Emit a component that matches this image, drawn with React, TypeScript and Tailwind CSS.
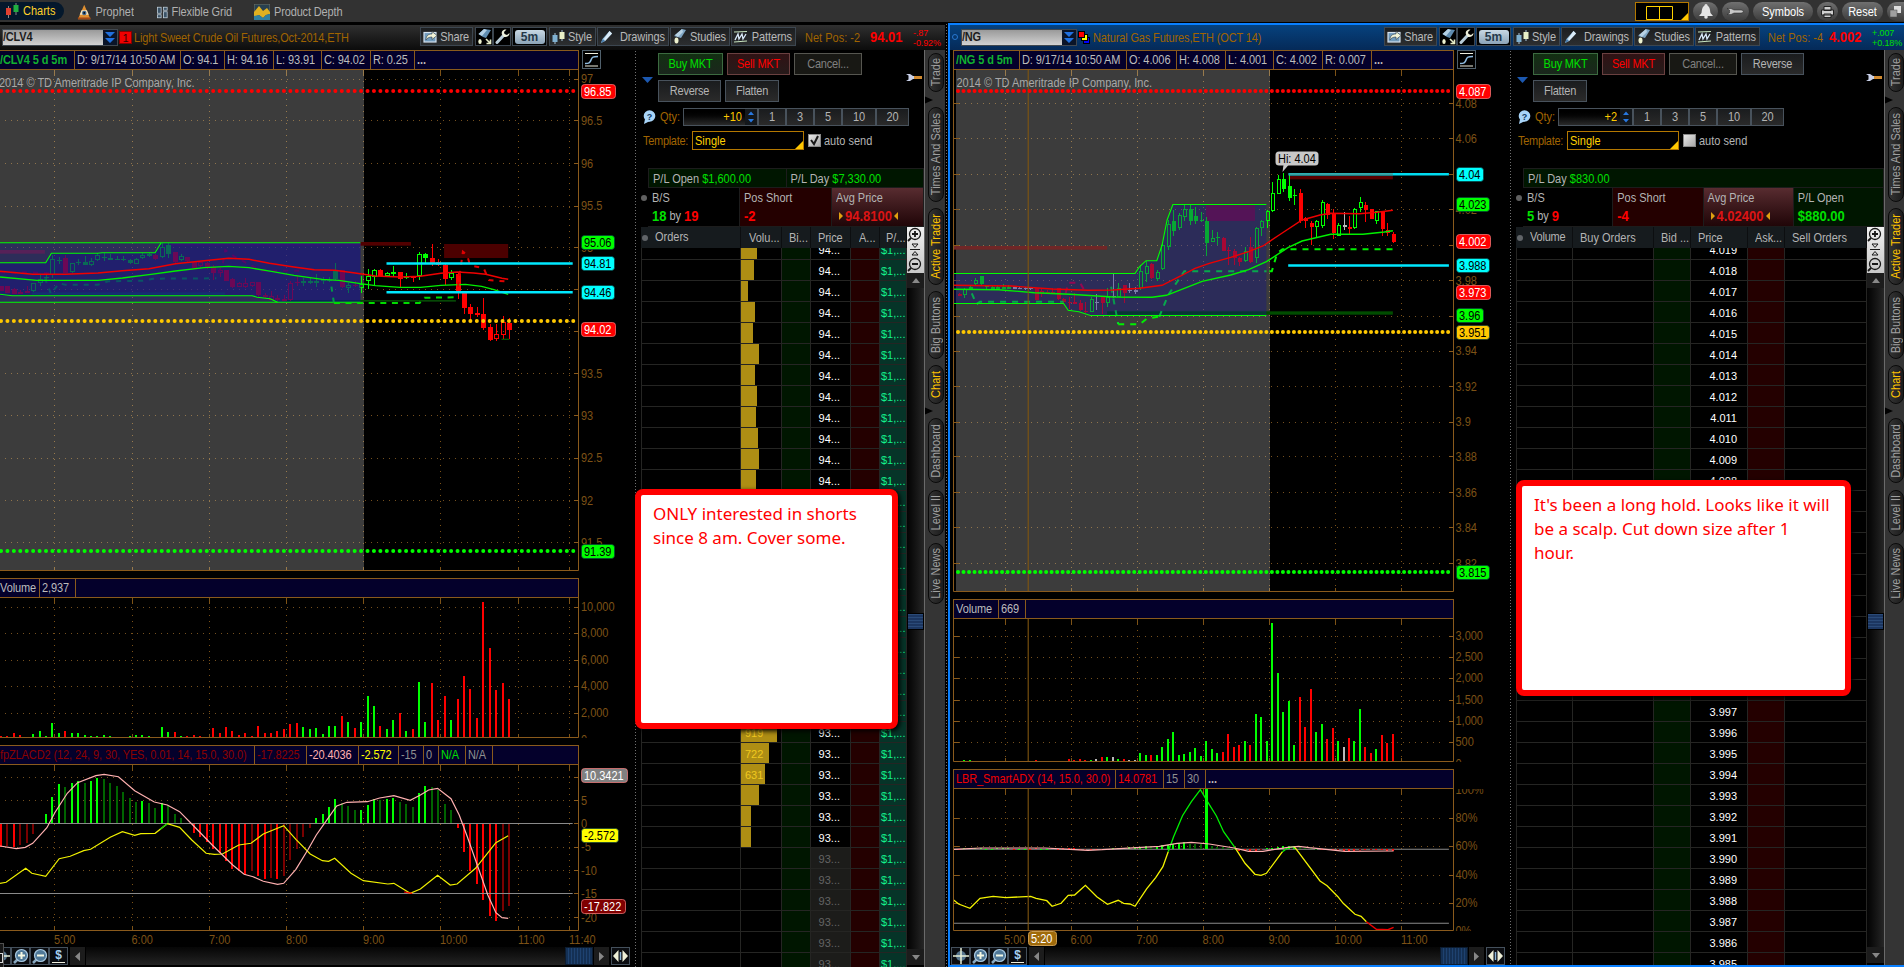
import type { ReactNode } from 'react';

/* ---------- shared text helpers ---------- */

function L({ children, className = '' }: { children: ReactNode; className?: string }) {
  return <span className={`inline-block scale-y-[1.12] whitespace-pre ${className}`}>{children}</span>;
}

function T({ x, y, fill = '#7d5216', children, anchor = 'start', size = 11 }: { x: number; y: number; fill?: string; children: ReactNode; anchor?: 'start' | 'middle' | 'end'; size?: number }) {
  return (
    <text transform={`translate(${x} ${y + 4.4}) scale(1 1.12)`} fontSize={size} fill={fill} textAnchor={anchor}>
      {children}
    </text>
  );
}

function Plot({ x, y, w, h, children }: { x: number; y: number; w: number; h: number; children: ReactNode }) {
  return (
    <svg width={w} height={h} viewBox={`${x} ${y} ${w} ${h}`} className="block shrink-0 overflow-hidden">
      {children}
    </svg>
  );
}

/* ---------- chart data ---------- */

type Candle = [number, number, number, number, string];

// body top, body bottom, high, low, kind (upper case = hollow)
const CL: Candle[] = [
  [197, 214, 197, 214, 'r'], [199, 219, 199, 219, 'r'], [208, 221, 205, 222, 'r'], [215, 221, 210, 222, 'R'], [213, 219, 198, 220, 'R'],
  [190, 214, 188, 215, 'G'], [178, 190, 165, 198, 'G'], [171, 174, 155, 180, 'g'], [118, 166, 105, 175, 'G'], [119, 122, 110, 133, 'g'],
  [115, 158, 105, 160, 'r'], [130, 155, 128, 158, 'G'], [126, 129, 118, 134, 'g'], [126, 134, 108, 136, 'g'], [122, 136, 115, 138, 'G'],
  [105, 120, 100, 124, 'G'], [112, 115, 100, 122, 'g'], [114, 120, 103, 121, 'g'], [117, 120, 108, 121, 'g'], [116, 119, 108, 123, 'g'],
  [121, 128, 117, 132, 'g'], [118, 131, 115, 133, 'G'], [106, 115, 100, 117, 'G'], [103, 107, 98, 110, 'g'], [106, 117, 103, 119, 'r'],
  [80, 110, 70, 113, 'G'], [75, 102, 68, 115, 'g'], [97, 125, 95, 128, 'r'], [108, 120, 102, 123, 'G'], [112, 123, 110, 125, 'r'],
  [125, 143, 122, 145, 'r'], [127, 138, 125, 143, 'R'], [130, 142, 125, 146, 'r'], [140, 160, 135, 180, 'r'], [150, 160, 145, 172, 'R'],
  [150, 182, 150, 184, 'r'], [178, 200, 173, 203, 'r'], [190, 200, 185, 200, 'R'], [190, 200, 175, 203, 'R'], [187, 198, 185, 200, 'R'],
  [187, 226, 187, 230, 'r'], [224, 232, 220, 234, 'r'], [229, 239, 212, 240, 'R'], [234, 240, 225, 242, 'r'], [238, 244, 225, 244, 'r'],
  [188, 240, 182, 243, 'R'], [185, 190, 168, 197, 'r'], [182, 190, 175, 197, 'G'], [184, 188, 173, 192, 'g'], [183, 188, 162, 200, 'G'],
  [176, 182, 172, 192, 'g'], [179, 182, 170, 185, 'g'], [150, 178, 130, 180, 'g'], [150, 200, 150, 205, 'r'], [196, 204, 190, 218, 'G'],
  [194, 197, 183, 200, 'r'], [193, 205, 167, 219, 'G'], [168, 182, 148, 208, 'G'], [150, 172, 148, 198, 'G'], [150, 168, 148, 168, 'r'],
  [160, 167, 155, 170, 'G'], [157, 163, 138, 170, 'G'], [156, 177, 156, 200, 'r'], [169, 175, 158, 177, 'G'], [171, 174, 168, 186, 'r'],
  [103, 168, 97, 180, 'G'], [103, 113, 99, 128, 'g'], [114, 130, 72, 138, 'r'], [127, 136, 118, 139, 'r'], [136, 177, 132, 196, 'r'],
  [160, 175, 150, 180, 'G'], [162, 217, 158, 238, 'r'], [218, 263, 215, 282, 'r'], [262, 282, 252, 298, 'r'], [280, 284, 262, 290, 'r'],
  [282, 323, 234, 329, 'r'], [322, 359, 311, 362, 'r'], [343, 356, 311, 362, 'R'], [306, 344, 288, 357, 'R'], [309, 329, 294, 358, 'r'],
];

const NG: Candle[] = [
  [432, 437, 430, 438, 'r'], [418, 434, 415, 443, 'G'], [412, 417, 405, 420, 'g'], [391, 403, 385, 408, 'G'], [378, 402, 378, 405, 'g'],
  [408, 412, 404, 416, 'g'], [411, 416, 405, 418, 'g'], [411, 416, 405, 418, 'g'], [410, 416, 402, 418, 'G'], [410, 416, 404, 416, 'g'],
  [412, 416, 410, 418, 'w'], [413, 417, 410, 418, 'w'], [413, 418, 410, 420, 'w'], [414, 418, 412, 420, 'w'], [414, 449, 414, 450, 'r'],
  [422, 432, 415, 440, 'R'], [425, 430, 420, 430, 'R'], [426, 430, 415, 432, 'r'], [414, 446, 414, 450, 'r'], [447, 455, 445, 460, 'r'],
  [455, 460, 440, 478, 'r'], [455, 460, 430, 460, 'R'], [459, 479, 450, 483, 'r'], [482, 486, 455, 488, 'r'], [447, 485, 440, 487, 'G'],
  [455, 458, 432, 480, 'w'], [440, 460, 437, 492, 'r'], [440, 460, 415, 470, 'G'], [438, 441, 372, 445, 'w'], [413, 440, 400, 440, 'G'],
  [405, 430, 405, 460, 'r'], [420, 423, 400, 430, 'w'], [421, 425, 410, 432, 'w'], [364, 415, 345, 420, 'G'], [347, 372, 333, 395, 'G'],
  [343, 385, 338, 388, 'r'], [365, 386, 360, 392, 'G'], [284, 357, 280, 360, 'G'], [221, 290, 210, 300, 'G'], [213, 242, 180, 258, 'g'],
  [194, 235, 190, 240, 'G'], [178, 200, 165, 212, 'G'], [178, 212, 165, 225, 'g'], [199, 214, 170, 222, 'g'], [211, 214, 185, 215, 'g'],
  [213, 279, 200, 317, 'g'], [263, 275, 240, 277, 'G'], [261, 265, 245, 285, 'g'], [263, 303, 262, 303, 'r'], [300, 304, 290, 345, 'r'],
  [304, 325, 298, 345, 'r'], [323, 335, 320, 348, 'r'], [303, 332, 290, 335, 'G'], [291, 337, 262, 338, 'r'], [235, 325, 232, 338, 'G'],
  [213, 233, 210, 258, 'G'], [184, 212, 180, 233, 'G'], [130, 184, 95, 186, 'G'], [88, 131, 75, 132, 'G'], [88, 117, 70, 125, 'g'],
  [109, 143, 75, 152, 'g'], [136, 139, 118, 165, 'g'], [129, 212, 118, 220, 'r'], [205, 214, 200, 233, 'r'], [219, 232, 213, 284, 'r'],
  [213, 232, 210, 260, 'G'], [157, 227, 150, 233, 'G'], [162, 194, 160, 208, 'r'], [190, 248, 178, 268, 'r'], [226, 257, 220, 258, 'G'],
  [226, 230, 186, 240, 'w'], [232, 237, 198, 255, 'r'], [178, 235, 175, 238, 'G'], [157, 173, 141, 186, 'G'], [164, 179, 155, 215, 'r'],
  [178, 206, 176, 208, 'r'], [184, 212, 182, 222, 'G'], [184, 236, 183, 257, 'r'], [240, 248, 220, 257, 'r'], [252, 276, 246, 280, 'r'],
];

const CL_VOL = '528r 528r 519r 525r - 522g 513g 528g 489g 519g 513r 519g 519g 525g 528g 528g 525g 528g - - 528g 525g 525g 528g - 501g 516g 516r 528g 528r 525r 528r - 504r 519r 501r 513r 525r 519r 528r 498r 519r 519r 513r 507r 492r 489r 501g 507g 504g 522g 498g 498g 468r 486g 504r 486g 408g 438g 498r 507g 480g 459r 513g 507r 366g 486g 369r 480r 408r 480g 417r 348r 387r 474r 126r 264r 390r 369r 417r'.split(' ');
const CL_MACD = '862r 858m 862r 856m 850m 822m - 762g 711g 672g 681d 669g 663g 669d 663g 654g 657d 669d 678d 696d 714d 726d 723g 729d 744d 729g 735d 762d 774d 792r 819r 831r 846r 867r 879r 903r 927r 933r 942r 933m 948r 957r 954m 957r 948m 900m 867m 831m 804m 774g 762g 741g 717g 729d 738d 750d 750g 735g 717g 720d 717g 714g 726d 732d 741d 699g 678g 681d 690d 732d 750d 804r 876r 933r 972r 1020r 1068r 1083r 1053m 1038m'.split(' ');
const NG_VOL = '- 540g 540g - - - - - - - - - - - 540r - - - - - 537r 540r 537r 540r 540g 537w 531r 531g 531w 537g 537r 540w 540w 519g 525g 525r 525g 501g 477g 456g 525g 522g 516g 504g 528g 483g 507g 519g 516r 462r 501r 495r 483g 495r 402g 411g 483g 129g 279g 396g 363g 495g 351r 441r 327r 456g 432g 477r 444r 483g 501w 474r 483g 387g 501r 519r 507g 465r 489r 462r'.split(' ');
const NG_MACD = '806r 805g 805g 805g 805g 806g 806g 805g 805g 805g 806r 806g 806g 806r 805r 806g 806g 805r 806r 805r 804r 804r 810r 810m 810r 811r 810r 809m 805g 804g 803g 802g 801g 800g 799g 798d 798g 796g 795g 791g 789g 787g 792d 793d 791d - 797d 800d 802d 805d 806d 812r 812r 812r 812r 811m 804g 803g 801g 799g 799g 798g 800d 803d 805d 806d 810r 806g 811r 812m 812r 812r 812r 812m 811r 810m 810r 811r 812r 813r'.split(' ');

const COLORS: Record<string, string> = { r: '#ff0000', g: '#00ff00', w: '#b9b9b9', d: '#006400', m: '#7a0000' };

type Scale = { sx: (u: number) => number; sy: (u: number) => number };
const clPrice: Scale = { sx: (u) => u / 2.45, sy: (u) => u / 3 + 220 };
const clLower: Scale = { sx: (u) => u / 2.45, sy: (u) => u / 3 + 560 };
const ngPrice: Scale = { sx: (u) => u / 2.8 + 945, sy: (u) => u / 3 + 150 };
const ngLower: Scale = { sx: (u) => u / 2.8 + 945, sy: (u) => u / 3 + 580 };

const clX = (i: number) => Math.round(1 + i * 6.43);
const ngX = (i: number) => Math.round(959 + i * 5.493);

const pts = (s: Scale, raw: string) =>
  raw.split(' ').map((p) => {
    const [a, b] = p.split(',').map(Number);
    return `${s.sx(a).toFixed(1)},${s.sy(b).toFixed(1)}`;
  }).join(' ');

function Line({ s, d, color, dash, op = 1, w = 1.1 }: { s: Scale; d: string; color: string; dash?: string; op?: number; w?: number }) {
  return <polyline points={pts(s, d)} fill="none" stroke={color} strokeWidth={w} strokeDasharray={dash} opacity={op} />;
}

function Box({ s, x1, y1, x2, y2, fill }: { s: Scale; x1: number; y1: number; x2: number; y2: number; fill: string }) {
  return <rect x={s.sx(x1)} y={s.sy(y1)} width={s.sx(x2) - s.sx(x1)} height={s.sy(y2) - s.sy(y1)} fill={fill} />;
}

function Candles({ data, xAt, s, half }: { data: Candle[]; xAt: (i: number) => number; s: Scale; half: number }) {
  return (
    <g shapeRendering="crispEdges">
      {data.map(([t, b, hi, lo, k], i) => {
        const x = xAt(i);
        const c = COLORS[k.toLowerCase()];
        const top = Math.round(s.sy(t));
        const bot = Math.max(top + 1, Math.round(s.sy(b)));
        const hollow = k === 'G' || k === 'R';
        return (
          <g key={i} stroke={c} strokeWidth={1}>
            <line x1={x + 0.5} x2={x + 0.5} y1={Math.round(s.sy(hi))} y2={top} />
            <line x1={x + 0.5} x2={x + 0.5} y1={bot} y2={Math.round(s.sy(lo))} />
            {hollow ? (
              <rect x={x + 0.5 - (half - 0.5)} y={top + 0.5} width={2 * half - 1} height={Math.max(1, bot - top - 1)} fill="none" />
            ) : (
              <rect x={x + 0.5 - half} y={top} width={2 * half} height={bot - top} fill={c} stroke="none" />
            )}
          </g>
        );
      })}
    </g>
  );
}

function Bars({ data, xAt, s, base, w = 2 }: { data: string[]; xAt: (i: number) => number; s: Scale; base: number; w?: number }) {
  return (
    <g shapeRendering="crispEdges">
      {data.map((v, i) => {
        if (v === '-') return null;
        const y = s.sy(parseInt(v, 10));
        const b = s.sy(base);
        return <rect key={i} x={xAt(i) - w / 2} y={Math.min(y, b)} width={w} height={Math.max(1, Math.abs(b - y))} fill={COLORS[v.slice(-1)]} />;
      })}
    </g>
  );
}

function Grid({ xs, ys, x1, x2, y1, y2, split, inner = true }: { xs: number[]; ys: number[]; x1: number; x2: number; y1: number; y2: number; split?: number; inner?: boolean }) {
  return (
    <g shapeRendering="crispEdges">
      {ys.map((y) => (
        <g key={y}>
          <line x1={x1 + 5} x2={x2 - 9} y1={Math.round(y) + 0.5} y2={Math.round(y) + 0.5} stroke="#75501f" strokeDasharray="1 5" />
          {split ? <line x1={x1 + 5} x2={split} y1={Math.round(y) + 0.5} y2={Math.round(y) + 0.5} stroke="#8f744c" strokeDasharray="1 5" /> : null}
          <line x1={x2 - 5} x2={x2} y1={Math.round(y) + 0.5} y2={Math.round(y) + 0.5} stroke="#8a5a1c" />
          {x1 > 0 ? <line x1={x1} x2={x1 + 5} y1={Math.round(y) + 0.5} y2={Math.round(y) + 0.5} stroke="#8a5a1c" /> : null}
        </g>
      ))}
      {xs.map((x) => {
        const c = split && x < split + 1 ? '#987a4c' : '#7d5216';
        const p = Math.floor(x) + 0.5;
        return (
          <g key={x} stroke={c}>
            {inner ? <line x1={p} x2={p} y1={y1 + 5} y2={y2 - 4} strokeDasharray="1 5" /> : null}
            <line x1={p} x2={p} y1={y1} y2={y1 + 5} />
            <line x1={p} x2={p} y1={y2 - 4} y2={y2} />
          </g>
        );
      })}
    </g>
  );
}

function Dots({ y, x1, x2, pitch, color }: { y: number; x1: number; x2: number; pitch: number; color: string }) {
  return <line x1={x1} x2={x2} y1={y} y2={y} stroke={color} strokeWidth={4} strokeLinecap="round" strokeDasharray={`0.01 ${pitch - 0.01}`} />;
}

function Badge({ x, y, w, fill, text, children }: { x: number; y: number; w: number; fill: string; text: string; children: string }) {
  return (
    <g>
      <rect x={x + 0.5} y={y - 7} width={w - 1} height={14} rx={3} fill={fill} stroke={text === '#fff' ? '#ff8080' : '#063a3a'} strokeOpacity={0.7} strokeWidth={1} />
      <T x={x + 3} y={y} fill={text}>{children}</T>
    </g>
  );
}

const CLX = [54.5, 132.3, 209.5, 286.5, 363.7, 440.4, 518.6, 569.4];
const CLY: [number, string][] = [[78.7, '97'], [120.4, '96.5'], [163.3, '96'], [205.6, '95.5'], [247.4, '95'], [289.4, ''], [331.4, ''], [373.4, '93.5'], [415.4, '93'], [457.5, '92.5'], [500.4, '92'], [542.4, '91.5']];
const NGX = [1005.4, 1071.4, 1137.5, 1203.6, 1269.6, 1335.7, 1401.4];
const NGY: [number, string][] = [[103.4, '4.08'], [138.4, '4.06'], [174.3, ''], [209.4, '4.02'], [244.6, ''], [280.3, '3.98'], [315.6, ''], [350.5, '3.94'], [386.3, '3.92'], [421.5, '3.9'], [456.3, '3.88'], [492.3, '3.86'], [527.4, '3.84'], [563.3, '3.82']];

/* ---------- left charts ---------- */

function ClPriceChart() {
  const s = clPrice;
  return (
    <Plot x={0} y={70} w={634} h={501}>
      <rect x={0} y={70} width={364} height={501} fill="#3c3c3c" />
      <Grid xs={CLX} ys={CLY.map((g) => g[0])} x1={0} x2={579} y1={70} y2={571} split={364} />
      {CLY.map(([y, t]) => <T key={y} x={581} y={y}>{t}</T>)}
      <Box s={s} x1={883} y1={66} x2={1007} y2={77} fill="#520000" />
      <Box s={s} x1={1088} y1={72} x2={1245} y2={114} fill="#4c0000" />
      <Box s={s} x1={0} y1={90} x2={110} y2={101} fill="#7c2a3a" />
      <Box s={s} x1={420} y1={68} x2={883} y2={77} fill="#6b2050" />
      <Box s={s} x1={78} y1={217} x2={551} y2={224} fill="#1c6a4a" />
      <Box s={s} x1={700} y1={240} x2={1117} y2={245} fill="#064806" />
      <Candles data={CL} xAt={clX} s={s} half={2.5} />
      <Line s={s} color="#00c828" dash="5 6" w={2} d="110,175 125,222 135,205 145,190 160,194 240,194 265,184 350,182 375,176 530,175" />
      <Line s={s} color="#c00030" dash="5 6" w={2} d="0,157 40,158 60,157 125,160" />
      <Line s={s} color="#c00030" dash="5 6" w={2} d="535,160 546,130 552,90 575,110 640,152 745,152" />
      <Box s={s} x1={0} y1={68} x2={883} y2={247} fill="rgba(20,20,140,0.36)" />
      <polygon points={pts(s, '0,128 112,128 126,100 240,100 250,98 380,98 395,68 883,68 883,247 680,247 662,236 630,232 618,227 0,227')} fill="rgba(15,10,140,0.4)" />
      <Line s={s} color="#00ff00" d="0,68 883,68" />
      <Line s={s} color="#00ff00" d="0,128 112,128 126,100 240,100 250,98 380,98 395,68" />
      <Line s={s} color="#00ff00" d="0,223 30,227 618,227 630,232 662,236 680,247" />
      <Line s={s} color="#00ff00" d="0,247 883,247" />
      <Line s={s} color="#f00000" w={1.4} d="0,154 80,163 160,163 240,159 300,152 365,146 430,131 500,122 560,115 610,118 660,130 720,141 770,149 820,151 870,159 920,168 980,171 1030,169 1080,160 1120,156 1160,159 1190,163 1230,175 1245,178" />
      <Line s={s} color="#00f000" w={1.3} d="0,171 90,181 240,181 300,174 370,163 430,153 500,143 560,139 610,143 665,154 720,166 790,178 830,181 883,191 920,197 980,202 1030,202 1080,196 1140,193 1180,199 1210,209 1245,223" />
      <Line s={s} color="#009a48" dash="5 6" w={2} d="812,200 818,248" />
      <Line s={s} color="#00dc00" dash="6 5.6" w={2} d="818,249 1028,249 1040,233 1118,232" />
      <Line s={s} color="#e00000" dash="5 6" w={2} d="1122,200 1134,95 1145,106 1150,130 1160,138 1185,145 1198,180 1245,185" />
      <Line s={s} color="#00e8ff" w={2.4} d="947,130.5 1403,130.5" />
      <Line s={s} color="#00e8ff" w={2.4} d="947,217 1403,217" />
      <Line s={s} color="#006400" d="1229,358 1248,358" />
      <Dots y={91} x1={1} x2={574} pitch={6.43} color="#ff0000" />
      <Dots y={321} x1={1} x2={574} pitch={6.43} color="#ffc800" />
      <Dots y={551} x1={1} x2={574} pitch={6.43} color="#00ff00" />
      <T x={-1} y={82.5} fill="#a8a8a8">2014 © TD Ameritrade IP Company, Inc.</T>
      <path d="M0 570.5H578.5V70" fill="none" stroke="#8a5a1c" />
      <Badge x={581} y={91.5} w={35} fill="#ff0000" text="#fff">96.85</Badge>
      <Badge x={581} y={242.5} w={34} fill="#00ff00" text="#000">95.06</Badge>
      <Badge x={581} y={263.5} w={34} fill="#00ffff" text="#000">94.81</Badge>
      <Badge x={581} y={292.5} w={34} fill="#00ffff" text="#000">94.46</Badge>
      <Badge x={581} y={329.5} w={35} fill="#ff0000" text="#fff">94.02</Badge>
      <Badge x={581} y={551.5} w={34} fill="#00ff00" text="#000">91.39</Badge>
    </Plot>
  );
}

function ClVolumeChart() {
  const ys: [number, string][] = [[606.5, '10,000'], [632.5, '8,000'], [659.5, '6,000'], [685.5, '4,000'], [712.7, '2,000']];
  return (
    <Plot x={0} y={598} w={634} h={140}>
      <Grid xs={CLX} ys={ys.map((g) => g[0])} x1={0} x2={579} y1={598} y2={738} />
      {ys.map(([y, t]) => <T key={y} x={581} y={y}>{t}</T>)}
      <T x={581} y={740}>0</T>
      <Bars data={CL_VOL} xAt={clX} s={clLower} base={532} />
      <path d="M0 737.5H578.5V598" fill="none" stroke="#8a5a1c" />
    </Plot>
  );
}

function ClMacdChart() {
  const s = clLower;
  const ys: [number, string][] = [[776.7, ''], [800.3, '5'], [823.3, '0'], [846.7, '-5'], [870.3, '-10'], [893.3, '-15'], [917.3, '-20']];
  const hours: [number, string][] = [[54, '5:00'], [131.5, '6:00'], [209, '7:00'], [286, '8:00'], [363, '9:00'], [440, '10:00'], [518, '11:00'], [569, '11:40']];
  return (
    <Plot x={0} y={765} w={634} h={182}>
      <Grid xs={CLX} ys={ys.map((g) => g[0])} x1={0} x2={579} y1={765} y2={930} />
      {ys.map(([y, t]) => <T key={y} x={581} y={y}>{t}</T>)}
      <Bars data={CL_MACD} xAt={clX} s={s} base={790} />
      <Line s={s} color="#8a8a8a" d="0,790.5 1403,790.5" />
      <Line s={s} color="#8a8a8a" d="0,1000.5 1403,1000.5" />
      <Line s={s} color="#f0f000" w={1.2} d="0,970 15,967 63,925 78,940 112,949 145,896 172,889 205,872 222,868 270,832 300,815 330,826 345,821 380,820 410,791 440,802 470,840 505,880 525,883 545,882 585,855 615,850 645,822 695,797 725,838 760,882 790,902 805,904 820,895 860,940 890,962 950,972 965,970 1005,1000 1030,987 1072,946 1103,975 1120,972 1165,925 1215,848 1245,827" />
      <Line s={s} color="#00d000" w={1.2} d="392,808 410,791" />
      <Line s={s} color="#ff0000" w={1.2} d="990,996 1010,1000" />
      <Line s={s} color="#ffb0b0" w={1.2} d="0,858 40,866 62,862 80,850 115,803 135,757 165,700 190,668 235,647 255,643 290,650 330,692 378,726 410,735 440,755 470,792 520,855 570,915 598,943 620,950 645,964 680,973 695,970 725,928 755,868 775,825 798,785 825,738 850,727 900,725 930,714 965,707 1005,721 1030,705 1050,690 1072,685 1105,716 1125,765 1145,830 1165,900 1195,1005 1215,1058 1230,1073 1245,1075" />
      <path d="M0 930.5H578.5V765" fill="none" stroke="#8a5a1c" />
      <Badge x={581} y={775.5} w={47} fill="#808080" text="#fff">10.3421</Badge>
      <Badge x={581} y={835.5} w={38} fill="#ffff00" text="#000">-2.572</Badge>
      <Badge x={581} y={906.5} w={45} fill="#800000" text="#fff">-17.822</Badge>
      {hours.map(([x, t]) => <T key={t} x={x} y={940}>{t}</T>)}
    </Plot>
  );
}

/* ---------- right charts ---------- */

const CROSS = '#80560f';

function NgPriceChart() {
  const s = ngPrice;
  return (
    <Plot x={950} y={70} w={559} h={522}>
      <rect x={956} y={70} width={314} height={522} fill="#3c3c3c" />
      <Grid xs={NGX} ys={NGY.map((g) => g[0])} x1={954} x2={1454} y1={70} y2={592} split={1270} />
      {NGY.map(([y, t]) => <T key={y} x={1455.5} y={y}>{t}</T>)}
      <Box s={s} x1={24} y1={288} x2={454} y2={299} fill="#702626" />
      <Box s={s} x1={962} y1={77} x2={1254} y2={88} fill="#5a0000" />
      <Box s={s} x1={731} y1={163} x2={868} y2={213} fill="#7a1638" />
      <Box s={s} x1={454} y1={484} x2={1254} y2={494} fill="#004c00" />
      <Candles data={NG} xAt={ngX} s={s} half={2} />
      <Line s={s} color="#00ff28" dash="6 6" w={2} d="75,430 88,462 98,455 332,455" />
      <Line s={s} color="#00e828" dash="6 6" w={2} d="465,410 485,522" />
      <Line s={s} color="#e00030" dash="6 6" w={2} d="338,430 345,398 378,398 392,425" />
      <Line s={s} color="#00ff28" dash="6 6" w={2} d="600,500 625,435 670,364 900,364" />
      <polygon points={pts(s, '24,371 532,371 545,350 563,332 593,332 608,285 622,210 638,163 900,163 900,496 407,496 375,485 345,481 332,461 24,461')} fill="rgba(20,20,140,0.37)" />
      <Line s={s} color="#00ff00" d="24,370.5 532,370.5 545,350 563,332 593,332 608,285 622,210 638,163.5 900,163.5" />
      <Line s={s} color="#00ff00" d="24,460.5 332,460.5 345,481 375,485 407,496.5 900,496.5" />
      <Line s={s} color="#ee0000" w={1.4} d="24,406 185,408 300,417 400,421 470,420 545,415 608,406 660,378 700,355 740,340 800,322 850,305 890,288 940,252 1000,210 1050,195 1080,190 1160,191 1210,187 1254,181" />
      <Line s={s} color="#00f000" w={1.4} d="24,418 150,419 250,428 350,433 470,441 580,442 620,436 670,415 720,394 800,375 850,359 900,335 960,293 1000,273 1080,253 1170,253 1230,246 1254,242" />
      <Line s={s} color="#00f000" dash="6 6" w={2} d="485,523 545,523 565,506 598,500" />
      <Line s={s} color="#00f000" dash="6 6" w={2} d="908,364 915,364 930,310 945,298 1254,298" />
      <Line s={s} color="#00dcf0" w={2.4} d="962,73 1411,73" />
      <Line s={s} color="#3aa0a0" w={2} d="962,73 1254,73" />
      <Line s={s} color="#00e8ff" w={2.4} d="961,346.5 1411,346.5" />
      <Line s={s} color={CROSS} d="233,-240 233,1326" />
      <Dots y={91} x1={958} x2={1449} pitch={5.507} color="#ff0000" />
      <Dots y={332} x1={958} x2={1449} pitch={5.507} color="#ffc800" />
      <Dots y={572} x1={958} x2={1449} pitch={5.507} color="#00ff00" />
      <T x={956.5} y={82.5} fill="#a8a8a8">2014 © TD Ameritrade IP Company, Inc.</T>
      <path d="M953.5 70V591.5H1453.5V70" fill="none" stroke="#8a5a1c" />
      <path d="M1282.5 172l1-7h5z" fill="#c8c8c8" />
      <rect x={1275.5} y={151.5} width={43} height={14} rx={3.5} fill="#c8c8c8" />
      <T x={1278} y={158.5} fill="#000">Hi: 4.04</T>
      <Badge x={1456} y={91.5} w={35} fill="#ff0000" text="#fff">4.087</Badge>
      <Badge x={1456} y={174.5} w={28} fill="#00ffff" text="#000">4.04</Badge>
      <Badge x={1456} y={204.5} w={34} fill="#00ff00" text="#000">4.023</Badge>
      <Badge x={1456} y={241.5} w={35} fill="#ff0000" text="#fff">4.002</Badge>
      <Badge x={1456} y={265.5} w={34} fill="#00ffff" text="#000">3.988</Badge>
      <Badge x={1456} y={292.5} w={35} fill="#ff0000" text="#fff">3.973</Badge>
      <Badge x={1456} y={315.5} w={28} fill="#00ff00" text="#000">3.96</Badge>
      <Badge x={1456} y={332.5} w={34} fill="#ffc800" text="#000">3.951</Badge>
      <Badge x={1456} y={572.5} w={34} fill="#00ff00" text="#000">3.815</Badge>
    </Plot>
  );
}

function NgVolumeChart() {
  const ys: [number, string][] = [[635.5, '3,000'], [656.5, '2,500'], [677.5, '2,000'], [699.5, '1,500'], [720.5, '1,000'], [741.5, '500']];
  return (
    <Plot x={950} y={619} w={559} h={143}>
      <Grid xs={NGX} ys={ys.map((g) => g[0])} x1={954} x2={1454} y1={619} y2={762} />
      {ys.map(([y, t]) => <T key={y} x={1455.5} y={y}>{t}</T>)}
      <T x={1455.5} y={764}>0</T>
      <Bars data={NG_VOL} xAt={ngX} s={ngLower} base={543} />
      <Line s={ngLower} color={CROSS} d="233,110 233,545" />
      <path d="M953.5 619V761.5H1453.5V619" fill="none" stroke="#8a5a1c" />
    </Plot>
  );
}

function NgAdxChart() {
  const s = ngLower;
  const ys: [number, string][] = [[817.5, '80%'], [845.5, '60%'], [874.5, '40%'], [902.5, '20%']];
  const hours: [number, string][] = [[1004, '5:00'], [1070.5, '6:00'], [1136.5, '7:00'], [1202.5, '8:00'], [1268.5, '9:00'], [1334.5, '10:00'], [1401, '11:00']];
  return (
    <Plot x={950} y={789} w={559} h={158}>
      <Grid xs={NGX} ys={ys.map((g) => g[0])} x1={954} x2={1454} y1={789} y2={930} />
      {ys.map(([y, t]) => <T key={y} x={1455.5} y={y}>{t}</T>)}
      <T x={1455.5} y={790}>100%</T>
      <T x={1455.5} y={931}>0%</T>
      <rect x={1450} y={931} width={30} height={7} fill="#000" />
      <Line s={s} color="#8a8a8a" d="24,808 1411,808" />
      <Line s={s} color="#8a8a8a" d="24,1030 1411,1030" />
      <Bars data={NG_MACD} xAt={ngX} s={s} base={808} />
      <rect x={1205} y={789} width={3} height={60} fill="#00ff00" />
      <Line s={s} color="#f4f400" w={1.3} d="24,960 38,972 70,985 98,955 135,949 170,953 240,949 255,955 285,962 300,979 325,970 345,946 363,945 393,916 425,950 455,973 485,961 500,970 518,972 532,979 565,926 590,893 610,860 625,815" />
      <Line s={s} color="#00f000" w={1.3} d="625,815 640,770 665,707 690,665 715,629 735,665 760,708 780,755 812,803" />
      <Line s={s} color="#f4f400" w={1.3} d="812,803 840,850 868,883 885,886 900,880 945,815" />
      <Line s={s} color="#00f000" w={1.3} d="945,815 960,803 978,800" />
      <Line s={s} color="#f4f400" w={1.3} d="978,800 1050,903 1070,917 1100,950 1115,970 1148,1003 1165,1009 1180,1025" />
      <Line s={s} color="#ee0000" w={1.4} d="1180,1025 1208,1048 1240,1049 1256,1042" />
      <Line s={s} color="#ffb0b0" w={1.2} d="24,808 100,804 280,804 350,808 400,811 440,809 500,805 600,799 650,790 690,787 740,792 810,804 850,814 890,814 960,802 990,799 1020,803 1120,814 1256,813" />
      <Line s={s} color={CROSS} d="233,620 233,1050" />
      <path d="M953.5 789V930.5H1453.5V789" fill="none" stroke="#8a5a1c" />
      {hours.map(([x, t]) => <T key={t} x={x} y={940}>{t}</T>)}
      <rect x={1028.5} y={931.5} width={28} height={14} rx={3} fill="#a06a0a" stroke="#c89a50" />
      <T x={1031} y={938.5} fill="#fff">5:20</T>
    </Plot>
  );
}

/* ---------- icons ---------- */

const ShareIcon = () => (
  <svg width="15" height="13" viewBox="0 0 15 13"><rect x="1" y="2.500" width="12" height="9.500" fill="#6f9abc" stroke="#d4e2ee" strokeWidth="1.200" /><path d="M3 10c0-4 2-6 6-6V1.500l5 4-5 4V7C6 7 4 8 3 10z" fill="#f2f4d8" stroke="#2a3844" strokeWidth=".6" /></svg>
);
const FlaskIcon = () => (
  <svg width="14" height="15" viewBox="0 0 14 15"><path d="M1 7L9 0l4 1-5 8z" fill="#7fa6c4" /><path d="M2 6l7-6 1 3-5 5z" fill="#b8d2e4" /><ellipse cx="3.500" cy="11.500" rx="2" ry="3" fill="#eef2d0" /></svg>
);
const FilterIcon = () => (
  <svg width="15" height="16" viewBox="0 0 15 16"><path d="M1.500 5L7 0l7 1-5 8-3-1z" fill="#5f8cb0" /><path d="M1.500 5L7 0l3 1-5 6z" fill="#b4d0e4" /><ellipse cx="3" cy="12.500" rx="1.700" ry="2.500" fill="#eef2d0" /><path d="M9 10l4 4M13.500 10.500v4h-4" stroke="#e6ecc8" strokeWidth="1.600" fill="none" /></svg>
);
const WrenchIcon = () => (
  <svg width="15" height="15" viewBox="0 0 15 15"><path d="M2 13.500L8.500 6.500" stroke="#b8ccd8" strokeWidth="3" strokeLinecap="round" /><path d="M11.500 0.500C8 0 6 2.500 7 5.500L9 8c3 .5 5.500-1 5.500-4L12 6 9.500 5 9 3z" fill="#eef0dc" /></svg>
);
const CandleIcon = () => (
  <svg width="13" height="14" viewBox="0 0 13 14"><path d="M3 3v11M10 0v11" stroke="#a8c4d8" /><rect x="0.500" y="5" width="5" height="7" fill="#7fb0d0" /><rect x="7.500" y="2" width="5" height="7" fill="#e8f0c8" /></svg>
);
const PencilIcon = () => (
  <svg width="13" height="14" viewBox="0 0 13 14"><path d="M1 13l1.500-4L9.500 1l2.500 2.500-7 7.500z" fill="#9cc4e0" /><path d="M9.500 1L12 3.500l-7 7.500L4 9z" fill="#dcecf8" /><path d="M1 13l1.500-4L5 11z" fill="#4c80b0" /></svg>
);
const PatternIcon = () => (
  <svg width="14" height="12" viewBox="0 0 14 12"><path d="M0 1L13 0.500M0 11l13-1" stroke="#c8e4c0" /><path d="M1 9l3-6 1 5 3-5 1 5 3-5" stroke="#d8e8f8" strokeWidth="1.300" fill="none" /></svg>
);
const SmallWrench = () => (
  <svg width="16" height="9" viewBox="0 0 16 9"><path d="M0 1h4l3 2h2v3H7L4 8H0l2.500-1.500v-4z" fill="#c8d0e8" /><rect x="8" y="3" width="8" height="3" fill="#d08a30" /></svg>
);

/* ---------- panel header ---------- */

function ToolButton({ icon, label, className }: { icon: ReactNode; label: string; className: string }) {
  return (
    <div className={`flex h-[19px] shrink-0 items-center border border-[#3c4650] bg-gradient-to-b from-[#1c1e20] to-[#2c2e30] pl-[2px] text-[#b8b8b8] ${className}`}>
      {icon}
      <L className="ml-auto pr-[3px] tracking-[-0.1px]">{label}</L>
    </div>
  );
}

function PanelHeader({ active, symbol, title, titleCls, net, price, chg, pct, mark }: { active?: boolean; symbol: string; title: string; titleCls: string; net: string; price: string; chg: string; pct: string; mark: ReactNode }) {
  return (
    <div className={`flex h-[25px] shrink-0 items-start overflow-hidden pl-[2px] pt-[2px] text-[11px] leading-[14px] ${active ? 'bg-gradient-to-b from-[#06427e] to-[#052a58]' : 'bg-gradient-to-b from-[#303030] to-[#0c0c0c]'}`}>
      {active && <div className="mr-[3px] mt-[7px] h-[6px] w-[6px] shrink-0 rounded-full border border-[#2878d0]" />}
      <div className="mt-[2px] flex h-[17px] w-[116px] shrink-0 border border-[#404850]">
        <div className="w-[100px] bg-gradient-to-b from-[#9a9a9a] to-[#d2d2d2] font-bold text-[#1c1c1c]">
          <L className="tracking-[-0.2px]">{symbol}</L>
        </div>
        <div className="flex flex-1 items-center justify-center bg-[#0a1428]">
          <svg width="10" height="12"><path d="M0 0h10L5 5zM0 6h10L5 11z" fill="#2070e0" /></svg>
        </div>
      </div>
      <div className="ml-[1px] mt-[4px] w-[14px] shrink-0">{mark}</div>
      <div className={`mt-[4px] shrink-0 pl-[1px] tracking-[-0.14px] text-[#a06400] ${titleCls}`}><L>{title}</L></div>
      <ToolButton icon={<ShareIcon />} label="Share" className="mr-[2px] w-[53px]" />
      <div className="flex h-[19px] w-[18px] shrink-0 items-center justify-center border border-[#3c4650] bg-black"><FilterIcon /></div>
      <div className="mr-px flex h-[19px] w-[18px] shrink-0 items-center justify-center border border-[#3c4650] bg-black"><WrenchIcon /></div>
      <div className="mr-[2px] flex h-[19px] w-[35px] shrink-0 items-center justify-center border border-[#3c4650] bg-black">
        <div className="flex h-[14px] w-[30px] items-center justify-center rounded-[3px] bg-gradient-to-b from-[#c8d8e4] to-[#8ca4b8] text-[12px] font-bold text-[#24384a]"><L>5m</L></div>
      </div>
      <ToolButton icon={<CandleIcon />} label="Style" className="mr-px w-[47px]" />
      <ToolButton icon={<PencilIcon />} label="Drawings" className="mr-px w-[72px]" />
      <ToolButton icon={<FlaskIcon />} label="Studies" className="mr-px w-[60px]" />
      <ToolButton icon={<PatternIcon />} label="Patterns" className="w-[65px]" />
      <div className={`mt-[4px] shrink-0 text-[#a06400] ${active ? 'ml-[8px] w-[61px]' : 'ml-[9px] w-[65px]'}`}><L>Net Pos: {net}</L></div>
      <div className="mt-[4px] w-[43px] shrink-0 text-[13px] font-bold text-[#ff0000]"><L>{price}</L></div>
      <div className={`mt-[1px] text-[9px] leading-[10px] tracking-[-0.1px] ${active ? 'text-[#00e000]' : 'text-[#ff0000]'}`}>
        <div>{chg}</div>
        <div>{pct}</div>
      </div>
    </div>
  );
}

/* ---------- info strips and toolbars ---------- */

type Cell = { t: string; w: string; c?: string };

function Strip({ cells, width, first, left }: { cells: Cell[]; width: string; first?: boolean; left?: boolean }) {
  return (
    <div className="flex h-[20px] shrink-0">
      <div className={`flex h-[20px] shrink-0 border-y border-r border-[#8a5a1c] bg-[#04002b] text-[11px] leading-[19px] tracking-[-0.1px] text-[#bcbcbc] ${left ? 'border-l' : ''} ${width}`}>
        {cells.map((c, i) => (
          <div key={i} className={`shrink-0 overflow-hidden whitespace-nowrap ${c.w} ${c.c ?? ''} ${i < cells.length - 1 || c.t !== '...' ? 'border-r border-[#8a5a1c]' : 'font-bold'} ${i === 0 && !left ? 'pl-0' : 'pl-[2px]'}`}>
            <L>{c.t}</L>
          </div>
        ))}
      </div>
      {first && (
        <div className="ml-[3px] flex h-[19px] w-[19px] items-center justify-center border border-[#50606c] bg-black">
          <svg width="15" height="15" viewBox="0 0 15 15"><path d="M1 1.500h13M1 14h13" stroke="#f0f0e0" strokeWidth="1.200" /><path d="M1 11.500c4 0 5-.5 6-3.500s2-3.500 7-3.500" fill="none" stroke="#90bce0" strokeWidth="1.600" /></svg>
        </div>
      )}
    </div>
  );
}

function Splitter({ className }: { className: string }) {
  return <div className={`shrink-0 bg-[radial-gradient(#505050_0.6px,transparent_0.7px)] bg-[length:2px_2px] bg-clip-content py-[2px] ${className}`} />;
}

function IconBox({ children, w = 'w-[19px]' }: { children: ReactNode; w?: string }) {
  return <div className={`flex h-[18px] shrink-0 items-center justify-center overflow-hidden border border-[#44505c] bg-[#0a0c10] ${w}`}>{children}</div>;
}

function Lens({ minus }: { minus?: boolean }) {
  return (
    <svg width="16" height="16" viewBox="0 0 16 16"><path d="M1 15l4-4" stroke="#88a8c0" strokeWidth="2.500" /><circle cx="8.500" cy="7.500" r="6" fill="#4f7898" stroke="#a8c8e0" strokeWidth="1.200" /><path d={minus ? 'M5 7.500h7' : 'M5 7.500h7M8.500 4v7'} stroke="#f4f8e4" strokeWidth="2" /></svg>
  );
}

function Toolbar({ clipped, track }: { clipped?: boolean; track: string }) {
  return (
    <div className="flex h-[18px] shrink-0">
      <div className={`flex h-[18px] shrink-0 items-center overflow-hidden border border-[#44505c] bg-[#0a0c10] ${clipped ? 'w-[11px] justify-end' : 'w-[19px] justify-center'}`}>
        <svg width="16" height="16" viewBox="0 0 16 16" className="shrink-0"><circle cx="8" cy="8" r="5" fill="#56748c" /><path d="M8 0v16M0 8h16" stroke="#e8f0d8" strokeWidth="1.500" /></svg>
      </div>
      <IconBox><Lens /></IconBox>
      <IconBox><Lens minus /></IconBox>
      <IconBox><span className="border-b border-[#f0f0e0] px-[3px] text-[12px] font-bold leading-[13px] text-[#a8d0f0]">$</span></IconBox>
      <div className="ml-[2px] flex w-[15px] shrink-0 items-center justify-center bg-[#1c1c1c]"><svg width="5" height="9"><path d="M5 0v9L0 4.500z" fill="#888" /></svg></div>
      <div className={`ml-px shrink-0 bg-gradient-to-b from-[#060606] to-[#242424] ${track}`} />
      <div className="w-[28px] shrink-0 border border-[#0c1c30] bg-[repeating-linear-gradient(90deg,#143054_0px,#143054_2px,#1e4270_2px,#1e4270_3px)]" />
      <div className="ml-px flex w-[15px] shrink-0 items-center justify-center bg-[#1c1c1c]"><svg width="5" height="9"><path d="M0 0v9l5-4.500z" fill="#888" /></svg></div>
      <div className="ml-[2px]"><IconBox><svg width="15" height="12" viewBox="0 0 15 12"><path d="M5.500 0v12L0 6zM9.500 0v12L15 6z" fill="#eef0d8" /><path d="M7.500 2v8" stroke="#8ab4d8" strokeWidth="1.500" /></svg></IconBox></div>
    </div>
  );
}

/* ---------- trade panel ---------- */

function Btn({ children, className }: { children: string; className: string }) {
  return <div className={`flex h-[22px] items-center justify-center border ${className}`}><L className="tracking-[-0.2px]">{children}</L></div>;
}

const PLAIN = 'border-[#48525c] bg-gradient-to-b from-[#1a1c1e] to-[#2a2a2a] text-[#b4b4b4]';

function TradeTop({ qty, checked }: { qty: string; checked?: boolean }) {
  return (
    <div className="shrink-0 text-[11px] leading-[14px]">
      <div className="flex h-[52px] pt-[3px]">
        <div className="w-[21px] shrink-0 pl-[5px] pt-[24px]"><svg width="11" height="6"><path d="M0 0h11L5.500 6z" fill="#1c58b0" /></svg></div>
        <div className="flex flex-1 flex-wrap content-start gap-x-[4px] gap-y-[5px]">
          <Btn className="w-[65px] border-[#3c6a40] bg-gradient-to-b from-[#123012] to-[#1a261c] text-[#00e000]">Buy MKT</Btn>
          <Btn className="w-[63px] border-[#6a4040] bg-gradient-to-b from-[#301214] to-[#261a1a] text-[#ff0000]">Sell MKT</Btn>
          <Btn className="w-[68px] border-[#565650] bg-[#181814] text-[#808080]">Cancel...</Btn>
          <Btn className={`w-[63px] ${PLAIN}`}>Reverse</Btn>
          <Btn className={`w-[54px] ${PLAIN}`}>Flatten</Btn>
        </div>
        <div className="w-[27px] shrink-0 pl-[9px] pt-[20px]"><SmallWrench /></div>
      </div>
      <div className="mt-[6px] flex h-[18px] items-center pl-[6px]">
        <svg width="13" height="14" viewBox="0 0 13 14"><circle cx="6.500" cy="6" r="5.800" fill="#a8d4f8" /><path d="M2 9l-1 5 6-3z" fill="#a8d4f8" /><text x="3.700" y="9.500" fontSize="9" fontWeight="bold" fill="#103860">?</text></svg>
        <L className="w-[27px] pl-[4px] text-[#a06400]">Qty:</L>
        <div className="flex h-[18px] w-[75px] items-center justify-end border border-[#48525c] bg-gradient-to-b from-[#000] to-[#2a2a2a] text-[#ffc800]">
          <L>{qty}</L>
          <svg width="12" height="16" className="ml-[3px] bg-[#14181c]"><path d="M3 6h6L6 2.500zM3 10h6l-3 3.500z" fill="#2878e0" /></svg>
        </div>
        <div className={`flex h-[18px] w-[28px] items-center justify-center border ${PLAIN}`}><L>1</L></div>
        <div className={`flex h-[18px] w-[28px] items-center justify-center border ${PLAIN}`}><L>3</L></div>
        <div className={`flex h-[18px] w-[28px] items-center justify-center border ${PLAIN}`}><L>5</L></div>
        <div className={`flex h-[18px] w-[34px] items-center justify-center border ${PLAIN}`}><L>10</L></div>
        <div className={`flex h-[18px] w-[33px] items-center justify-center border ${PLAIN}`}><L>20</L></div>
      </div>
      <div className="mt-[5px] flex h-[19px] items-center pl-[6px]">
        <L className="w-[49px] tracking-[-0.3px] text-[#a06400]">Template:</L>
        <div className="flex h-[19px] w-[112px] items-end justify-between border border-[#b47800] bg-black pl-[2px] text-[#ffd000]">
          <L className="mb-[1px]">Single</L>
          <svg width="8" height="8"><path d="M8 0v8H0z" fill="#ffc800" /></svg>
        </div>
        <div className="ml-[4px] h-[13px] w-[13px] border border-[#888] bg-gradient-to-br from-[#e8e8e8] to-[#a8a8a8]">
          {checked && <svg width="11" height="11"><path d="M2 5l3 4 4-8" fill="none" stroke="#181818" strokeWidth="2" /></svg>}
        </div>
        <L className="pl-[3px] text-[#b4b4b4]">auto send</L>
      </div>
    </div>
  );
}

function Avg({ children }: { children: string }) {
  return (
    <div className="flex-1 border-b border-r border-[#1c1c1c] bg-gradient-to-b from-[#582c30] to-[#200608] pl-[4px] pt-[3px]">
      <L className="text-[#b4b4b4]">Avg Price</L>
      <div className="flex items-center gap-[2px] pl-[3px] text-[13px] font-bold leading-[21px] text-[#dc1414]">
        <svg width="4" height="8"><path d="M0 0v8l4-4z" fill="#e0a010" /></svg>
        <L>{children}</L>
        <svg width="4" height="8"><path d="M4 0v8L0 4z" fill="#e0a010" /></svg>
      </div>
    </div>
  );
}

function Stat({ label, children, className = '' }: { label: string; children: ReactNode; className?: string }) {
  return (
    <div className={`flex-1 border-b border-r border-[#1c1c1c] pl-[4px] pt-[3px] ${className}`}>
      <L className="text-[#b4b4b4]">{label}</L>
      <div className="text-[13px] font-bold leading-[21px]">{children}</div>
    </div>
  );
}

function BuySell({ b, s }: { b: string; s: string }) {
  return (
    <Stat label="B/S">
      <L className="text-[#00e000]">{b}</L><L className="px-[3px] text-[11px] font-normal text-[#b4b4b4]">by</L><L className="text-[#ff0000]">{s}</L>
    </Stat>
  );
}

function Scroller() {
  return (
    <div className="flex w-[17px] shrink-0 flex-col">
      <div className="h-[46px] bg-gradient-to-b from-[#f0f0f0] to-[#c8c8c8]">
        <svg width="16" height="46" viewBox="0 0 16 46"><g fill="none" stroke="#181818" strokeWidth="1.300"><circle cx="8" cy="7" r="5.500" /><path d="M5 7h6M8 4v6M1 14l3-3" strokeWidth="1.800" /><circle cx="8" cy="37" r="5.500" /><path d="M5 37h6M1 44l3-3" strokeWidth="1.800" /><path d="M3 22.500h10M5 17h6l-3 3.500zM5 28h6l-3-3.500z" strokeWidth="1" /></g></svg>
      </div>
      <div className="flex h-[15px] items-center justify-center bg-[#1c1c1c]"><svg width="8" height="5"><path d="M0 5h8L4 0z" fill="#888" /></svg></div>
      <div className="h-[325px] bg-gradient-to-r from-[#040404] to-[#262626]" />
      <div className="h-[17px] border border-black bg-[repeating-linear-gradient(0deg,#1c3660_0px,#1c3660_2px,#2a4a78_2px,#2a4a78_3px)]" />
      <div className="flex-1 bg-gradient-to-r from-[#040404] to-[#262626]" />
      <div className="mb-[2px] flex h-[16px] items-center justify-center bg-[#1c1c1c]"><svg width="8" height="5"><path d="M0 0h8L4 5z" fill="#888" /></svg></div>
    </div>
  );
}

const CELL = 'border-b border-r border-[#252523] overflow-hidden';
const CL_BARS: Record<number, number> = { 0: 16, 1: 13, 2: 7, 3: 14, 4: 12, 5: 18, 6: 14, 7: 16, 8: 15, 9: 17, 10: 18, 11: 15, 23: 36, 24: 28, 25: 24, 26: 18, 27: 10, 28: 10 };
const CL_BAR_TEXT: Record<number, string> = { 23: '919', 24: '722', 25: '631' };

// rows whose price lies under a note
const covered = (k: number, from: number) => k >= from && k <= (from === 13 ? 21 : 22);

function ClTable() {
  const cols = 'grid grid-cols-[100px_41px_29px_40px_29px_27px]';
  const head = 'border-r border-[#0c0e10] overflow-hidden whitespace-nowrap';
  return (
    <div className="flex w-[266px] shrink-0 flex-col border-l border-[#252523] text-[11px]">
      <div className={`${cols} -ml-px h-[21px] shrink-0 bg-[#161b1e] leading-[23px] text-[#b4b4b4]`}>
        <div className={`flex items-center pl-px ${head}`}><i className="mr-[7px] h-[6px] w-[6px] rounded-full bg-[#606468]" /><L>Orders</L></div>
        <div className={`pl-[8px] ${head}`}><L>Volu...</L></div>
        <div className={`pl-[7px] ${head}`}><L>Bi...</L></div>
        <div className={`pl-[7px] ${head}`}><L className="tracking-[-0.1px]">Price</L></div>
        <div className={`pl-[8px] ${head}`}><L>A...</L></div>
        <div className={`pl-[6px] ${head}`}><L>P/...</L></div>
      </div>
      <div className="min-h-0 flex-1 overflow-hidden">
        <div className="-ml-px -mt-[9px]">
          {Array.from({ length: 35 }, (_, k) => (
            <div key={k} className={`${cols} h-[21px] leading-[22px]`}>
              <div className={CELL} />
              <div className={CELL}>
                {CL_BARS[k] ? <div className="h-[20px] whitespace-nowrap bg-[#ae8e14] pl-[4px] text-[#f0c81e]" style={{ width: CL_BARS[k] }}>{CL_BAR_TEXT[k] ?? ''}</div> : null}
              </div>
              <div className={`${CELL} bg-[#001600]`} />
              <div className={`${CELL} pr-[10px] text-right ${k > 28 ? 'bg-[#1c1c1a] text-[#646464]' : 'text-white'}`}>{covered(k, 12) ? '' : k < 20 ? '94...' : '93...'}</div>
              <div className={`${CELL} bg-[#240000]`} />
              <div className={`${CELL} bg-[#063428] pl-[1px] text-[#14f08c]`}>$1,...</div>
            </div>
          ))}
        </div>
      </div>
    </div>
  );
}

function NgTable() {
  const cols = 'grid grid-cols-[57px_81px_37px_57px_37px_82px]';
  const head = 'border-r border-[#0c0e10] overflow-hidden whitespace-nowrap';
  return (
    <div className="flex w-[351px] shrink-0 flex-col border-l border-[#252523] text-[11px]">
      <div className={`${cols} -ml-px h-[21px] shrink-0 bg-[#161b1e] leading-[23px] text-[#b4b4b4]`}>
        <div className={`flex items-center pl-px ${head}`}><i className="mr-[7px] h-[6px] w-[6px] rounded-full bg-[#606468]" /><L className="tracking-[-0.2px]">Volume</L></div>
        <div className={`pl-[7px] ${head}`}><L>Buy Orders</L></div>
        <div className={`pl-[7px] ${head}`}><L>Bid ...</L></div>
        <div className={`pl-[7px] ${head}`}><L className="tracking-[-0.1px]">Price</L></div>
        <div className={`pl-[7px] ${head}`}><L className="tracking-[-0.1px]">Ask...</L></div>
        <div className={`pl-[7px] ${head}`}><L>Sell Orders</L></div>
      </div>
      <div className="min-h-0 flex-1 overflow-hidden">
        <div className="-ml-px -mt-[9px]">
          {Array.from({ length: 35 }, (_, k) => (
            <div key={k} className={`${cols} h-[21px] leading-[22px]`}>
              <div className={CELL} />
              <div className={CELL} />
              <div className={`${CELL} bg-[#001600]`} />
              <div className={`${CELL} pr-[10px] text-right text-white`}>{covered(k, 13) || k === 12 ? '' : (4.019 - k * 0.001).toFixed(3)}</div>
              <div className={`${CELL} bg-[#240000]`} />
              <div className={CELL} />
            </div>
          ))}
        </div>
      </div>
    </div>
  );
}

function PL({ label, value }: { label: string; value: string }) {
  return <div className="flex-1 border border-l-0 border-[#1c1c1c] bg-[#001600] pl-[4px] leading-[20px] text-[#b4b4b4]"><L>{label} <span className="text-[#00e000]">{value}</span></L></div>;
}

/* ---------- side tabs ---------- */

function SideTab({ label, h, on }: { label: string; h: string; on?: boolean }) {
  return (
    <div className={`ml-[3px] flex w-[16px] shrink-0 items-center justify-center rounded-[8px] border border-[#0a0a0a] bg-gradient-to-r from-[#343434] to-[#1c1c1c] ${h}`}>
      <span className={`scale-x-[1.12] rotate-180 whitespace-nowrap text-[11px] leading-[14px] [writing-mode:vertical-rl] ${on ? 'text-[#ffc400]' : 'text-[#a0a0a0]'}`}>{label}</span>
    </div>
  );
}

const Notch = () => <svg width="9" height="8" className="-ml-px shrink-0"><path d="M0 0l9 4-9 4z" fill="#000" /></svg>;

function SideTabs() {
  return (
    <div className="flex w-[21px] shrink-0 flex-col overflow-hidden border-l border-[#6a6a6a] bg-[#343434] pt-[3px]">
      <SideTab label="Trade" h="h-[39px]" />
      <div className="flex h-[15px] shrink-0 items-center"><Notch /></div>
      <SideTab label="Times And Sales" h="h-[95px]" />
      <div className="h-[6px] shrink-0" />
      <SideTab label="Active Trader" h="h-[77px]" on />
      <div className="h-[6px] shrink-0" />
      <SideTab label="Big Buttons" h="h-[68px]" />
      <div className="h-[6px] shrink-0" />
      <SideTab label="Chart" h="h-[39px]" on />
      <div className="flex h-[14px] shrink-0 items-center"><Notch /></div>
      <SideTab label="Dashboard" h="h-[65px]" />
      <div className="h-[7px] shrink-0" />
      <SideTab label="Level II" h="h-[46px]" />
      <div className="h-[7px] shrink-0" />
      <SideTab label="Live News" h="h-[61px]" />
    </div>
  );
}

const Dotted = () => <div className="w-[3px] shrink-0 bg-[radial-gradient(#707070_0.6px,transparent_0.8px)] bg-[length:3px_3px]" />;

/* ---------- top bar ---------- */

function TopBar() {
  const pill = 'flex h-[19px] items-center justify-center rounded-full bg-gradient-to-b from-[#707070] to-[#3c3c3c] text-[11px] text-white';
  return (
    <div className="flex h-[23px] shrink-0 items-start border-b border-black bg-[#323232] text-[11px] leading-[18px] text-[#b0b0b0]">
      <div className="mt-[2px] flex h-[18px] w-[64px] items-center rounded-r-full bg-[#04182c] pl-[5px] text-[#ffd22a]">
        <svg width="15" height="16" viewBox="0 0 15 16"><path d="M3.500 3v12M11 0v12" stroke="#888" /><rect x="1" y="5" width="5" height="7" fill="#e04030" /><rect x="8.500" y="2" width="5" height="7" fill="#20b040" /></svg>
        <L className="pl-[3px]">Charts</L>
      </div>
      <div className="mt-[3px] flex w-[70px] items-center pl-[13px]">
        <svg width="16" height="17" viewBox="0 0 16 17"><path d="M8 0l7 16H1z" fill="#e09030" /><path d="M5 6h6l2 5H3z" fill="#f4e4c0" /><circle cx="8" cy="9" r="2.500" fill="#406890" /><circle cx="8" cy="9" r="1" fill="#000" /><path d="M1 15h14" stroke="#a04818" strokeWidth="2" /></svg>
        <L className="pl-[4px]">Prophet</L>
      </div>
      <div className="mt-[3px] flex w-[98px] items-center pl-[23px]">
        <svg width="14" height="15" viewBox="0 0 14 15" fill="#3c5468" stroke="#c4d4e0"><rect x=".5" y=".5" width="5" height="8" /><rect x=".5" y="10.500" width="5" height="4" /><rect x="8.500" y=".5" width="5" height="4" /><rect x="8.500" y="6.500" width="5" height="8" /></svg>
        <L className="pl-[4px] tracking-[-0.1px]">Flexible Grid</L>
      </div>
      <div className="mt-[3px] flex items-center pl-[22px]">
        <svg width="16" height="16" viewBox="0 0 16 16"><rect width="16" height="16" fill="#284050" stroke="#707060" /><path d="M0 8l5-6 4 5 4-3 3 4v2l-4 1-3 3-4-3-5 2z" fill="#e0b020" /><path d="M0 12l5-1 4 3 3-3 4-1v6H0z" fill="#3080a0" /></svg>
        <L className="pl-[4px] tracking-[-0.15px]">Product Depth</L>
      </div>
      <div className="ml-auto mt-[2px] flex gap-[4px]">
        <div className="flex h-[19px] w-[54px] items-end border border-[#b47800] bg-black">
          <svg width="52" height="17"><path d="M10.500 3.500h26v13h-26zM23.500 3.500v13" fill="none" stroke="#ffd000" /><path d="M52 10v7h-7z" fill="#ffc800" /></svg>
        </div>
        <div className={`${pill} w-[25px]`}><svg width="16" height="15" viewBox="0 0 16 15"><path d="M8 0c1 0 1.500.8 1.500 1.500C12 3 12 6 12.500 9l2.500 3H1l2.500-3C4 6 4 3 6.500 1.500 6.500.8 7 0 8 0z" fill="#e4e4e4" /><circle cx="8" cy="13" r="1.800" fill="#e4e4e4" /></svg></div>
        <div className={`${pill} w-[27px]`}><svg width="17" height="9" viewBox="0 0 17 9"><path d="M0 1.500h4l3 1.500h7c3 0 3 3 0 3H7L4 7.500H0L2.500 6V3z" fill="#c8c8c8" stroke="#222" strokeWidth=".5" /></svg></div>
        <div className={`${pill} w-[60px]`}><L>Symbols</L></div>
        <div className={`${pill} w-[21px]`}><svg width="13" height="12" viewBox="0 0 13 12"><path d="M3 0.500h7v4H3zM.5 4h12v5H.5zM3 8h7v3.500H3z" fill="#d0d0d0" stroke="#222" /></svg></div>
        <div className={`${pill} w-[41px]`}><L>Reset</L></div>
        <div className="flex h-[19px] w-[17px] items-center justify-center rounded-l-full bg-gradient-to-b from-[#707070] to-[#3c3c3c]"><svg width="11" height="11"><rect x="4" width="7" height="7" fill="#ddd" /><rect y="4" width="7" height="7" fill="#a0a0a0" stroke="#444" strokeWidth=".5" /></svg></div>
      </div>
    </div>
  );
}

function Note({ className, children }: { className: string; children: ReactNode }) {
  return (
    <div className={`absolute rounded-[8px] border-[6px] border-[#ff0000] bg-white pl-[12px] pt-[7px] font-['Noto_Sans',sans-serif] text-[17px] leading-[24px] text-[#ff0000] shadow-[2px_2px_5px_#000] ${className}`}>{children}</div>
  );
}

/* ---------- page ---------- */

export default function App() {
  return (
    <div className="relative flex h-[967px] w-[1904px] flex-col overflow-hidden bg-black font-['Liberation_Sans',Arial,sans-serif]">
      <TopBar />
      <div className="flex min-h-0 flex-1">
        {/* crude oil */}
        <div className="flex w-[948px] shrink-0">
          <div className="flex w-[945px] flex-col pt-[2px]">
            <PanelHeader
              symbol="/CLV4" title="Light Sweet Crude Oil Futures,Oct-2014,ETH" titleCls="w-[287px]" net="-2" price="94.01" chg="-.87" pct="-0.92%"
              mark={<div className="h-[13px] w-[13px] border border-[#800] bg-[#f00000] text-center leading-[12px] text-[#300]">1</div>}
            />
            <div className="flex min-h-0 flex-1">
              <div className="flex w-[634px] shrink-0 flex-col">
                <Strip
                  first width="w-[579px]"
                  cells={[
                    { t: '/CLV4 5 d 5m', w: 'w-[75px]', c: 'text-[#12b030] font-bold' }, { t: 'D: 9/17/14 10:50 AM', w: 'w-[106px]' }, { t: 'O: 94.1', w: 'w-[44px]' },
                    { t: 'H: 94.16', w: 'w-[49px]' }, { t: 'L: 93.91', w: 'w-[48px]' }, { t: 'C: 94.02', w: 'w-[49px]' }, { t: 'R: 0.25', w: 'w-[44px]' }, { t: '...', w: 'w-[60px]' },
                  ]}
                />
                <ClPriceChart />
                <Splitter className="h-[7px] w-[579px]" />
                <Strip width="w-[579px]" cells={[{ t: 'Volume', w: 'w-[40px]' }, { t: '2,937', w: 'w-[36px]' }]} />
                <ClVolumeChart />
                <Splitter className="h-[7px] w-[579px]" />
                <Strip
                  width="w-[579px]"
                  cells={[
                    { t: 'fpZLACD2 (12, 24, 9, 30, YES, 0.01, 14, 15.0, 30.0)', w: 'w-[255px]', c: 'text-[#8c0000]' }, { t: '-17.8225', w: 'w-[52px]', c: 'text-[#8c0000]' },
                    { t: '-20.4036', w: 'w-[52px]', c: 'text-[#ffb0b0]' }, { t: '-2.572', w: 'w-[40px]', c: 'text-[#ffff00]' }, { t: '-15', w: 'w-[25px]', c: 'text-[#909090]' },
                    { t: '0', w: 'w-[15px]', c: 'text-[#909090]' }, { t: 'N/A', w: 'w-[27px]', c: 'text-[#00e000]' }, { t: 'N/A', w: 'w-[27px]', c: 'text-[#909090]' },
                  ]}
                />
                <ClMacdChart />
                <Toolbar clipped track="w-[479px]" />
              </div>
              <Dotted />
              <div className="flex w-[287px] shrink-0 flex-col">
                <TradeTop qty="+10" checked />
                <div className="ml-[11px] mt-[18px] flex h-[20px] shrink-0 border-l border-[#1c1c1c] text-[11px]">
                  <PL label="P/L Open" value="$1,600.00" />
                  <PL label="P/L Day" value="$7,330.00" />
                </div>
                <div className="flex h-[39px] shrink-0 text-[11px] leading-[14px]">
                  <i className="ml-[4px] mr-[1px] mt-[7px] h-[6px] w-[6px] rounded-full bg-[#606060]" />
                  <BuySell b="18" s="19" />
                  <Stat label="Pos Short" className="bg-[#240000]"><L className="text-[#ff0000]">-2</L></Stat>
                  <Avg>94.8100</Avg>
                </div>
                <div className="flex min-h-0 flex-1 pl-[4px]"><ClTable /><Scroller /></div>
              </div>
              <SideTabs />
            </div>
          </div>
          <Dotted />
        </div>

        {/* natural gas */}
        <div className="flex w-[956px] shrink-0 flex-col border-y-2 border-l-2 border-[#0a80ff]">
          <PanelHeader
            active symbol="/NG" title="Natural Gas Futures,ETH (OCT 14)" titleCls="w-[292px]" net="-4" price="4.002" chg="+.007" pct="+0.18%"
            mark={<svg width="13" height="13"><rect x="5.500" y="6.500" width="6" height="6" fill="#0000ff" stroke="#000" /><rect x="3.500" y="3.500" width="6" height="6" fill="#ffff00" stroke="#000" /><rect x=".5" y=".5" width="6" height="6" fill="#ff0000" stroke="#000" /></svg>}
          />
          <div className="flex min-h-0 flex-1">
            <div className="flex w-[559px] shrink-0 flex-col">
              <div className="pl-[3px]">
                <Strip
                  first left width="w-[501px]"
                  cells={[
                    { t: '/NG 5 d 5m', w: 'w-[66px]', c: 'text-[#12b030] font-bold' }, { t: 'D: 9/17/14 10:50 AM', w: 'w-[107px]' }, { t: 'O: 4.006', w: 'w-[50px]' },
                    { t: 'H: 4.008', w: 'w-[49px]' }, { t: 'L: 4.001', w: 'w-[48px]' }, { t: 'C: 4.002', w: 'w-[49px]' }, { t: 'R: 0.007', w: 'w-[49px]' }, { t: '...', w: 'w-[60px]' },
                  ]}
                />
              </div>
              <NgPriceChart />
              <Splitter className="ml-[3px] h-[7px] w-[501px]" />
              <div className="pl-[3px]"><Strip left width="w-[501px]" cells={[{ t: 'Volume', w: 'w-[45px]' }, { t: '669', w: 'w-[27px]' }]} /></div>
              <NgVolumeChart />
              <Splitter className="ml-[3px] h-[7px] w-[501px]" />
              <div className="pl-[3px]">
                <Strip
                  left width="w-[501px]"
                  cells={[
                    { t: 'LBR_SmartADX (14, 15.0, 30.0)', w: 'w-[162px]', c: 'text-[#f00000]' }, { t: '14.0781', w: 'w-[48px]', c: 'text-[#f00000]' },
                    { t: '15', w: 'w-[21px]', c: 'text-[#909090]' }, { t: '30', w: 'w-[21px]', c: 'text-[#909090]' }, { t: '...', w: 'w-[60px]' },
                  ]}
                />
              </div>
              <NgAdxChart />
              <div className="pl-px"><Toolbar track="w-[395px]" /></div>
            </div>
            <Dotted />
            <div className="flex w-[372px] shrink-0 flex-col">
              <TradeTop qty="+2" />
              <div className="ml-[11px] mt-[18px] flex h-[20px] shrink-0 border-l border-[#1c1c1c] text-[11px]"><PL label="P/L Day" value="$830.00" /></div>
              <div className="flex h-[39px] shrink-0 text-[11px] leading-[14px]">
                <i className="ml-[4px] mr-[1px] mt-[7px] h-[6px] w-[6px] rounded-full bg-[#606060]" />
                <BuySell b="5" s="9" />
                <Stat label="Pos Short" className="bg-[#240000]"><L className="text-[#ff0000]">-4</L></Stat>
                <Avg>4.02400</Avg>
                <Stat label="P/L Open" className="bg-[#001600]"><L className="text-[#00e000]">$880.00</L></Stat>
              </div>
              <div className="flex min-h-0 flex-1 pl-[4px]"><NgTable /><Scroller /></div>
            </div>
            <SideTabs />
          </div>
        </div>
      </div>

      <div className="absolute left-[-2px] top-[943px] h-[26px] w-[6px] border border-[#505050] bg-[#161616]">
        <div className="mt-[9px] h-[10px] w-[4px] border border-l-0 border-[#d8d8d8]" />
      </div>

      <Note className="left-[635px] top-[489px] h-[240px] w-[263px]">
        <div className="whitespace-nowrap">ONLY interested in shorts</div>
        <div className="whitespace-nowrap">since 8 am. Cover some.</div>
      </Note>
      <Note className="left-[1516px] top-[480px] h-[216px] w-[335px]">
        <div className="whitespace-nowrap">It's been a long hold. Looks like it will</div>
        <div className="whitespace-nowrap">be a scalp. Cut down size after 1</div>
        <div className="whitespace-nowrap">hour.</div>
      </Note>
    </div>
  );
}
